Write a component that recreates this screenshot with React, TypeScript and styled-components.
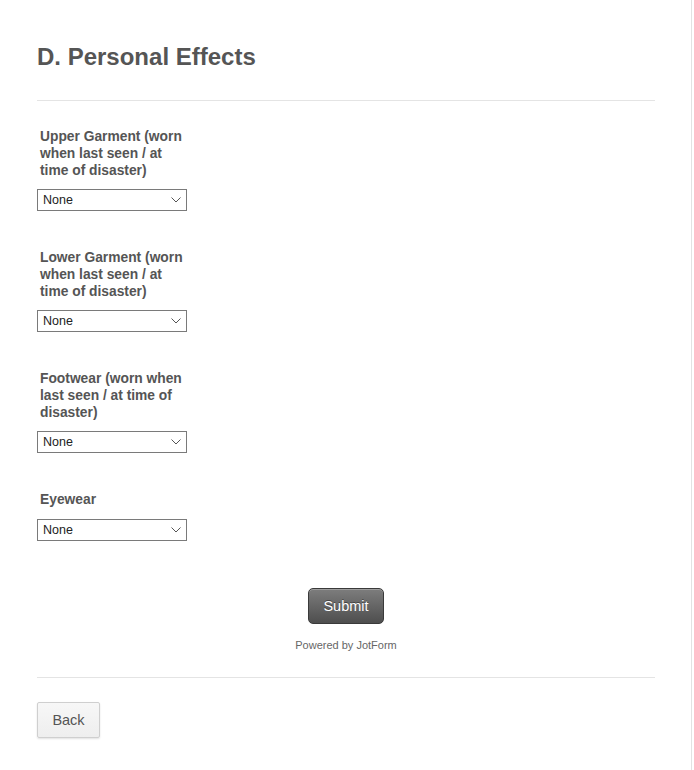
import React from "react";
import styled, { createGlobalStyle } from "styled-components";

const Global = createGlobalStyle`
  html, body { margin: 0; padding: 0; background: #ffffff; }
  body { font-family: "Liberation Sans", Arial, sans-serif; }
`;

const Page = styled.div`
  width: 692px;
  min-height: 770px;
  box-sizing: border-box;
  border-right: 1px solid #e2e2e2;
  background: #ffffff;
`;

const Form = styled.div`
  width: 618px;
  margin-left: 37px;
  padding-top: 43px;
  display: flex;
  flex-direction: column;
`;

const Heading = styled.h1`
  margin: 0;
  font-size: 24px;
  line-height: 28px;
  font-weight: 700;
  color: #555555;
`;

const Divider = styled.div<{ $top: number; $bottom: number }>`
  height: 1px;
  background: #e4e4e4;
  margin-top: ${(p) => p.$top}px;
  margin-bottom: ${(p) => p.$bottom}px;
`;

const Fields = styled.div`
  display: flex;
  flex-direction: column;
  gap: 38px;
`;

const Field = styled.div<{ $gap: number }>`
  display: flex;
  flex-direction: column;
  gap: ${(p) => p.$gap}px;
`;

const Label = styled.label`
  width: 150px;
  padding-left: 3px;
  font-size: 13.8px;
  line-height: 17px;
  font-weight: 700;
  color: #555555;
`;

const SelectWrap = styled.div`
  position: relative;
  width: 150px;
  height: 22px;
`;

const Select = styled.select`
  appearance: none;
  -webkit-appearance: none;
  width: 150px;
  height: 22px;
  box-sizing: border-box;
  border: 1px solid #7a7a7a;
  border-radius: 0;
  background: #ffffff;
  padding: 0 0 0 5px;
  font-family: "Liberation Sans", Arial, sans-serif;
  font-size: 12.5px;
  color: #222222;
  outline: none;
`;

const Chevron = styled.svg`
  position: absolute;
  right: 6px;
  top: 8px;
  width: 10px;
  height: 6px;
  pointer-events: none;
`;

const SubmitArea = styled.div`
  margin-top: 47px;
  display: flex;
  flex-direction: column;
  align-items: center;
`;

const SubmitButton = styled.button`
  width: 76px;
  height: 36px;
  box-sizing: border-box;
  border: 1px solid #3a3a3a;
  border-radius: 5px;
  background: linear-gradient(#7d7d7d, #4e4e4e);
  box-shadow: inset 0 1px 0 rgba(255, 255, 255, 0.25);
  color: #ffffff;
  font-family: "Liberation Sans", Arial, sans-serif;
  font-size: 14.5px;
  text-shadow: 0 -1px 0 rgba(0, 0, 0, 0.4);
  cursor: pointer;
`;

const Powered = styled.div`
  margin-top: 15px;
  font-size: 11px;
  line-height: 13px;
  color: #666666;
`;

const BackButton = styled.button`
  align-self: flex-start;
  width: 63px;
  height: 36px;
  box-sizing: border-box;
  border: 1px solid #cfcfcf;
  border-radius: 2px;
  background: linear-gradient(#f7f7f7, #eeeeee);
  box-shadow: 0 1px 2px rgba(0, 0, 0, 0.12);
  color: #555555;
  font-family: "Liberation Sans", Arial, sans-serif;
  font-size: 14.5px;
  cursor: pointer;
`;

const fields = [
  { label: "Upper Garment (worn when last seen / at time of disaster)", gap: 10 },
  { label: "Lower Garment (worn when last seen / at time of disaster)", gap: 10 },
  { label: "Footwear (worn when last seen / at time of disaster)", gap: 10 },
  { label: "Eyewear", gap: 11 },
];

export default function App() {
  return (
    <Page>
      <Global />
      <Form>
        <Heading>D. Personal Effects</Heading>
        <Divider $top={29} $bottom={27} />
        <Fields>
          {fields.map((f) => (
            <Field key={f.label} $gap={f.gap}>
              <Label>{f.label}</Label>
              <SelectWrap>
                <Select defaultValue="None">
                  <option>None</option>
                </Select>
                <Chevron viewBox="0 0 10 6">
                  <path d="M0.5 0.5 L5 5 L9.5 0.5" fill="none" stroke="#555" strokeWidth="1" />
                </Chevron>
              </SelectWrap>
            </Field>
          ))}
        </Fields>
        <SubmitArea>
          <SubmitButton>Submit</SubmitButton>
          <Powered>Powered by JotForm</Powered>
        </SubmitArea>
        <Divider $top={25} $bottom={24} />
        <BackButton>Back</BackButton>
      </Form>
    </Page>
  );
}
